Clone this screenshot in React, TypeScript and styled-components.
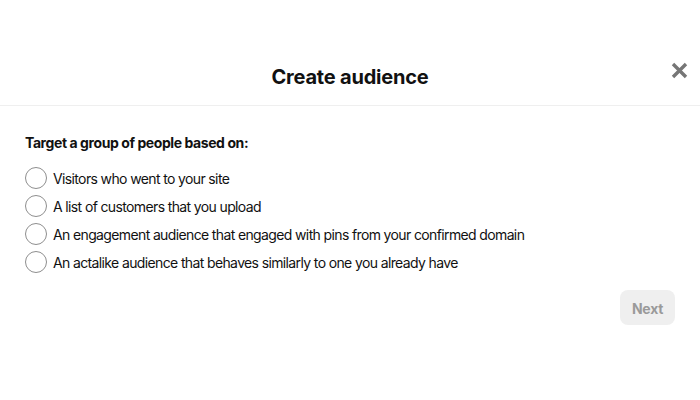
import React, { useState } from 'react';
import styled, { createGlobalStyle } from 'styled-components';

const GlobalStyle = createGlobalStyle`
  html, body {
    margin: 0;
    padding: 0;
    background: #ffffff;
  }
  body {
    font-family: Inter, "Noto Sans", "Liberation Sans", sans-serif;
    color: #111111;
    -webkit-font-smoothing: antialiased;
  }
  *, *::before, *::after {
    box-sizing: border-box;
  }
`;

const Modal = styled.div`
  width: 700px;
  height: 400px;
  display: flex;
  flex-direction: column;
  background: #ffffff;
`;

const Header = styled.header`
  position: relative;
  height: 106px;
  padding-top: 63px;
  border-bottom: 1px solid #efefef;
  display: flex;
  justify-content: center;
`;

const Title = styled.h1`
  margin: 0;
  font-size: 20px;
  line-height: 28px;
  font-weight: 700;
  letter-spacing: -0.2px;
  color: #111111;
`;

const CloseButton = styled.button`
  position: absolute;
  top: 58px;
  right: 9px;
  width: 24px;
  height: 24px;
  padding: 0;
  border: none;
  background: transparent;
  display: flex;
  align-items: center;
  justify-content: center;
  cursor: pointer;
`;

const Body = styled.section`
  padding: 27px 25px 0;
  display: flex;
  flex-direction: column;
`;

const Heading = styled.h2`
  margin: 0 0 11px;
  font-size: 14px;
  line-height: 20px;
  font-weight: 700;
  letter-spacing: -0.42px;
  color: #111111;
`;

const Options = styled.div`
  display: flex;
  flex-direction: column;
`;

const Option = styled.label`
  display: flex;
  align-items: center;
  height: 28px;
  gap: 6px;
  font-size: 14px;
  letter-spacing: -0.63px;
  color: #111111;
  cursor: pointer;
`;

const Circle = styled.span<{ checked: boolean }>`
  width: 22px;
  height: 22px;
  border-radius: 50%;
  border: ${({ checked }) => (checked ? '6px solid #111111' : '1px solid #8e8e8e')};
  flex-shrink: 0;
`;

const Footer = styled.footer`
  display: flex;
  justify-content: flex-end;
  padding: 14px 25px 0;
`;

const NextButton = styled.button<{ enabled: boolean }>`
  width: 55px;
  height: 35px;
  padding: 1px 0 0;
  border: none;
  border-radius: 8px;
  background: ${({ enabled }) => (enabled ? '#e60023' : '#efefef')};
  color: ${({ enabled }) => (enabled ? '#ffffff' : '#9a9a9a')};
  font-family: inherit;
  font-size: 14px;
  font-weight: 700;
  letter-spacing: -0.3px;
  cursor: ${({ enabled }) => (enabled ? 'pointer' : 'default')};
`;

const options = [
  'Visitors who went to your site',
  'A list of customers that you upload',
  'An engagement audience that engaged with pins from your confirmed domain',
  'An actalike audience that behaves similarly to one you already have',
];

export default function App() {
  const [selected, setSelected] = useState<number | null>(null);

  return (
    <>
      <GlobalStyle />
      <Modal>
        <Header>
          <Title>Create audience</Title>
          <CloseButton aria-label="Close">
            <svg width="17" height="17" viewBox="0 0 17 17">
              <path d="M2 2 L15 15 M15 2 L2 15" stroke="#767676" strokeWidth="3.4" strokeLinecap="butt" />
            </svg>
          </CloseButton>
        </Header>
        <Body>
          <Heading>Target a group of people based on:</Heading>
          <Options>
            {options.map((text, i) => (
              <Option key={text} onClick={() => setSelected(i)}>
                <Circle checked={selected === i} />
                {text}
              </Option>
            ))}
          </Options>
        </Body>
        <Footer>
          <NextButton enabled={selected !== null}>Next</NextButton>
        </Footer>
      </Modal>
    </>
  );
}
